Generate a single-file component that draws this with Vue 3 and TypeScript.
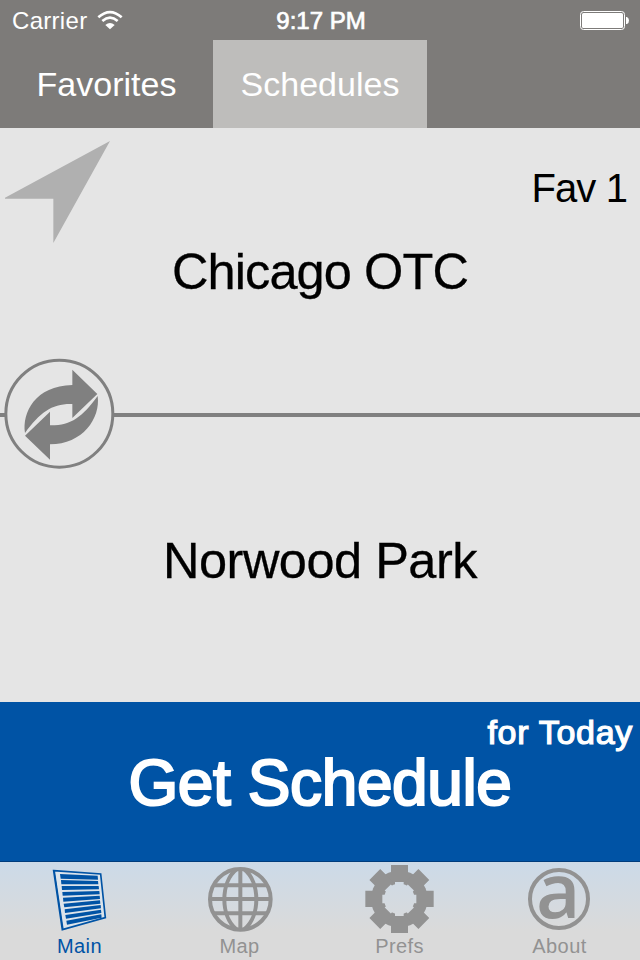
<script setup lang="ts">
import { ref } from 'vue'

type Tab = { id: string; label: string }

const sections: string[] = ['Favorites', 'Schedules']
const activeSection = ref('Schedules')
const origin = ref('Chicago OTC')
const destination = ref('Norwood Park')
const tabs: Tab[] = [
  { id: 'main', label: 'Main' },
  { id: 'map', label: 'Map' },
  { id: 'prefs', label: 'Prefs' },
  { id: 'about', label: 'About' },
]
const activeTab = ref('main')
const slats: string[] = [
  '180,57 293,62 294,74 182,71',
  '183,75 294,78 295,88 184,88',
  '185,93 296,93 297,103 186,105',
  '187,111 298,108 299,118 188,122',
  '189,128 299,122 300,132 190,140',
  '191,146 300,136 301,146 193,157',
  '194,163 302,150 303,160 195,174',
  '196,180 303,164 304,174 198,191',
  '199,197 304,178 305,188 201,209',
]

function swapStations(): void {
  const previous = origin.value
  origin.value = destination.value
  destination.value = previous
}
</script>

<template>
  <div class="screen">
    <header class="status">
      <div class="carrier">
        <span>Carrier</span>
        <svg class="wifi" viewBox="293 29 78 60">
          <path d="M297 51 Q332 20 367 51 M309 62 Q332 42 355 62" fill="none" stroke="#fff" stroke-width="8" />
          <path d="M318 74 Q332 62 346 74 L332 87Z" fill="#fff" />
        </svg>
      </div>
      <span class="clock">9:17 PM</span>
      <svg class="battery" viewBox="0 0 50 20">
        <rect x=".5" y=".5" width="44" height="18" rx="3" fill="none" stroke="#fff" stroke-width="1" />
        <rect x="2" y="2" width="41" height="15" rx="1.5" fill="#fff" />
        <path d="M46 6h1q2 1 2 3.5T47 13h-1z" fill="#fff" />
      </svg>
    </header>

    <nav class="sections">
      <button
        v-for="name in sections"
        :key="name"
        class="section"
        :class="{ selected: name === activeSection }"
        @click="activeSection = name"
      >{{ name }}</button>
    </nav>

    <main class="stations">
      <section class="station">
        <svg class="locate" viewBox="0 0 390 360">
          <path d="M15 203 L330 33 L160 339 V206 H15Z" fill="#b0b0b0" />
        </svg>
        <span class="favorite">Fav 1</span>
        <span class="name">{{ origin }}</span>
      </section>
      <div class="divider">
        <svg class="swap" viewBox="0 0 390 375" @click="swapStations">
          <circle cx="178" cy="191" r="160.5" fill="#e5e5e5" stroke="#808080" stroke-width="9" />
          <path d="M217 59 L292 132 L217 204 V162 C157 160 121 186 75 249 C66 188 106 107 217 105Z" fill="#808080" />
          <path d="M150 329 L75 257 L150 185 V226 C213 227 246 202 293 138 C302 205 248 283 150 283Z" fill="#808080" />
        </svg>
      </div>
      <section class="station">
        <span class="name destination">{{ destination }}</span>
      </section>
    </main>

    <button class="schedule">
      <span class="day">for Today</span>
      <span class="action">Get Schedule</span>
    </button>

    <footer class="tabbar">
      <button
        v-for="tab in tabs"
        :key="tab.id"
        class="tab"
        :class="[tab.id, { current: tab.id === activeTab }]"
        @click="activeTab = tab.id"
      >
        <svg class="icon" viewBox="0 21 480 225">
          <g v-if="tab.id === 'main'">
            <path d="M161 47 L302 57 L316 188 L187 224Z" fill="#dce4eb" stroke="#0053a5" stroke-width="5" />
            <path d="M163 48 L189 222" stroke="#0053a5" stroke-width="4" />
            <polygon v-for="points in slats" :key="points" :points="points" fill="#0053a5" />
          </g>
          <g v-else-if="tab.id === 'map'" fill="none" stroke="#929292" stroke-width="12">
            <circle cx="241" cy="133" r="91" />
            <path d="M241 40V226M149 132H333M162 91H320M162 175H320" />
            <path d="M229 43C181 82 181 184 229 223M253 43C301 82 301 184 253 223" />
          </g>
          <g v-else-if="tab.id === 'prefs'">
            <mask id="gear-hole">
              <rect x="120" y="20" width="240" height="225" fill="#fff" />
              <circle cx="238" cy="132" r="46" fill="#000" />
              <path d="M225 81h26v102h-26zM187 119h102v26H187z" fill="#000" />
              <path d="M225 83h26v98h-26zM189 119h98v26H189z" transform="rotate(45 238 132)" fill="#000" />
            </mask>
            <g mask="url(#gear-hole)" fill="#929292">
              <circle cx="238" cy="132" r="85" />
              <path d="M213 30h51v204h-51zM136 107h205v49H136z" />
              <path d="M215 28h46v208h-46zM134 109h208v46H134z" transform="rotate(45 238 132)" />
            </g>
          </g>
          <g v-else>
            <circle cx="237" cy="132" r="87" fill="none" stroke="#929292" stroke-width="12" />
            <text class="glyph" x="235" y="190" text-anchor="middle">a</text>
          </g>
        </svg>
        <span class="label">{{ tab.label }}</span>
      </button>
    </footer>
  </div>
</template>

<style>
body {
  margin: 0;
}
</style>

<style scoped>
.screen {
  display: flex;
  flex-direction: column;
  width: 640px;
  height: 960px;
  overflow: hidden;
  background: #e5e5e5;
  font-family: "Liberation Sans", Arial, sans-serif;
}

button {
  padding: 0;
  border: 0;
  border-radius: 0;
  background: none;
  font: inherit;
}

svg {
  display: block;
}

.status {
  display: grid;
  grid-template-columns: 1fr auto 1fr;
  align-items: center;
  box-sizing: border-box;
  height: 40px;
  padding: 1px 10px 0 12px;
  background: #7d7b79;
  color: #fff;
  font-size: 24px;
}

.carrier {
  display: flex;
  align-items: center;
  gap: 10px;
  letter-spacing: 0.3px;
}

.wifi {
  width: 26px;
  height: 20px;
  margin-top: -2px;
}

.clock {
  -webkit-text-stroke: 0.7px #fff;
}

.battery {
  justify-self: end;
  width: 50px;
  height: 20px;
}

.sections {
  display: grid;
  grid-template-columns: 213px 214px 213px;
  height: 88px;
  background: #7d7b79;
}

.section {
  color: #fff;
  font-size: 34px;
}

.section.selected {
  background: #bebdbb;
}

.stations {
  display: flex;
  flex-direction: column;
  height: 574px;
  color: #000;
}

.station {
  position: relative;
  display: flex;
  flex: 1;
  align-items: center;
  justify-content: center;
}

.locate {
  position: absolute;
  top: 2px;
  left: 0;
  width: 130px;
  height: 120px;
}

.favorite {
  position: absolute;
  top: 38px;
  right: 13px;
  font-size: 40px;
  letter-spacing: -0.9px;
}

.name {
  padding-top: 2px;
  font-size: 50.5px;
  letter-spacing: -0.9px;
  -webkit-text-stroke: 0.3px #000;
}

.name.destination {
  letter-spacing: -0.5px;
}

.divider {
  position: relative;
  height: 4px;
  background: #808080;
}

.swap {
  position: absolute;
  top: -63px;
  left: 0;
  width: 130px;
  height: 125px;
}

.schedule {
  position: relative;
  display: flex;
  align-items: center;
  justify-content: center;
  box-sizing: border-box;
  height: 160px;
  border-bottom: 1px solid #003c7c;
  background: #0053a5;
  color: #fff;
}

.day {
  position: absolute;
  top: 11px;
  right: 7px;
  font-size: 34px;
  letter-spacing: 0.7px;
  -webkit-text-stroke: 1.2px #fff;
}

.action {
  padding-top: 2px;
  font-size: 64px;
  letter-spacing: -0.4px;
  -webkit-text-stroke: 2.2px #fff;
}

.tabbar {
  display: grid;
  grid-template-columns: repeat(4, 1fr);
  height: 98px;
  background: linear-gradient(#ccdae8, #dadada 70%);
}

.tab {
  display: flex;
  flex-direction: column;
  align-items: center;
  color: #929292;
}

.tab.current {
  color: #0053a5;
}

.icon {
  width: 160px;
  height: 75px;
  overflow: visible;
}

.label {
  margin-left: -1px;
  font-size: 20px;
  line-height: 18px;
  letter-spacing: 0.4px;
}

.glyph {
  fill: #929292;
  font-family: "Open Sans", sans-serif;
  font-size: 230px;
  font-weight: 600;
}
</style>
